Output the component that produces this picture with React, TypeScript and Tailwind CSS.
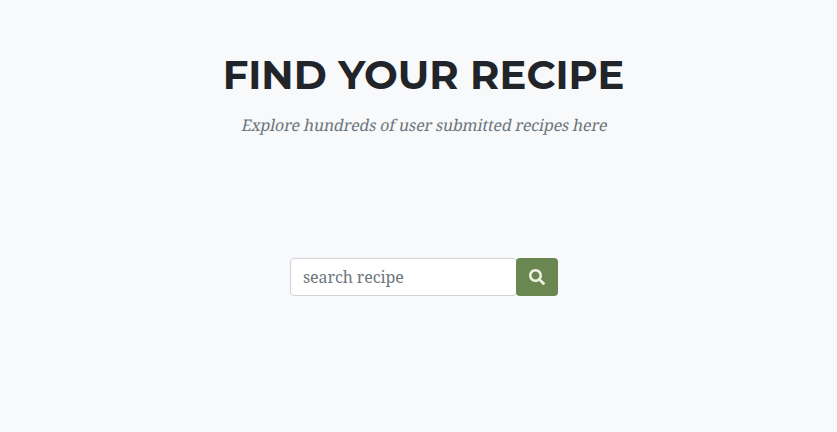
import { FaSearch } from "react-icons/fa";

export default function App() {
  return (
    <main className="flex h-[432px] w-full flex-col items-center bg-[#f8f9fa] pl-[11px] pt-[51px]">
      <h1 className="mr-px flex h-12 items-center whitespace-nowrap font-['Montserrat','Inter',sans-serif] text-[40px] font-bold leading-[48px] tracking-[0.03px] text-[#212529]">
        FIND YOUR RECIPE
      </h1>
      <p className="ml-[2px] mt-[14px] -skew-x-12 whitespace-nowrap font-['Roboto_Slab','Noto_Serif','DejaVu_Serif',serif] text-base leading-6 tracking-[-0.16px] text-[#6c757d]">
        Explore hundreds of user submitted recipes here
      </p>
      <form className="mt-[121px] flex h-[38px]" onSubmit={(e) => e.preventDefault()}>
        <input
          type="text"
          placeholder="search recipe"
          className="w-[227px] rounded border border-[#ced4da] bg-white px-3 font-['Roboto_Slab','Noto_Serif','DejaVu_Serif',serif] text-base tracking-[-0.1px] text-[#495057] outline-none placeholder:text-[#6c757d]"
        />
        <button type="submit" aria-label="Search" className="-ml-px flex w-[42px] items-center justify-center rounded bg-[#6a8752] text-[#f0f3e4]">
          <FaSearch size={16} />
        </button>
      </form>
    </main>
  );
}
